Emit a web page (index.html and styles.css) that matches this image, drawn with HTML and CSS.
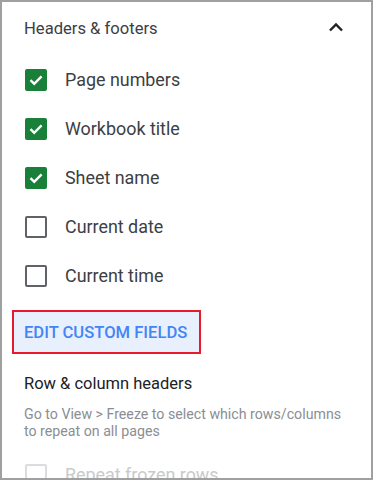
FILE: index.html
```html
<!DOCTYPE html>
<html lang="en">
    <head>
        <meta charset="UTF-8" />
        <meta name="viewport" content="width=device-width, initial-scale=1.0" />
        <title>Headers &amp; footers</title>
        <link rel="stylesheet" href="styles.css">
    </head>
    <body>
        <div class="panel">
            <div class="section-head">
                <span>Headers &amp; footers</span>
                <svg class="chevron" width="16" height="10" viewBox="0 0 16 10">
                    <polyline points="2,8.5 8,2.5 14,8.5" fill="none" stroke="#202124" stroke-width="2.4" />
                </svg>
            </div>

            <ul class="options">
                <li class="option">
                    <span class="box checked">
                        <svg width="22" height="22" viewBox="0 0 22 22"><path d="M5.5 11.2l3.7 3.7 7.4-7.6" fill="none" stroke="#fff" stroke-width="2.4" /></svg>
                    </span>
                    <span class="label">Page numbers</span>
                </li>
                <li class="option">
                    <span class="box checked">
                        <svg width="22" height="22" viewBox="0 0 22 22"><path d="M5.5 11.2l3.7 3.7 7.4-7.6" fill="none" stroke="#fff" stroke-width="2.4" /></svg>
                    </span>
                    <span class="label">Workbook title</span>
                </li>
                <li class="option">
                    <span class="box checked">
                        <svg width="22" height="22" viewBox="0 0 22 22"><path d="M5.5 11.2l3.7 3.7 7.4-7.6" fill="none" stroke="#fff" stroke-width="2.4" /></svg>
                    </span>
                    <span class="label">Sheet name</span>
                </li>
                <li class="option">
                    <span class="box"></span>
                    <span class="label">Current date</span>
                </li>
                <li class="option">
                    <span class="box"></span>
                    <span class="label">Current time</span>
                </li>
            </ul>

            <button class="custom-btn">EDIT CUSTOM FIELDS</button>

            <div class="sub-title">Row &amp; column headers</div>
            <p class="hint">Go to View &gt; Freeze to select which rows/columns to repeat on all pages</p>

            <div class="option disabled">
                <span class="box"></span>
                <span class="label">Repeat frozen rows</span>
            </div>
        </div>
    </body>
</html>
```

FILE: styles.css
```css
* {
    box-sizing: border-box;
}

body {
    margin: 0;
    font-family: Roboto, "Liberation Sans", Arial, sans-serif;
    background-color: #fff;
}

.panel {
    width: 373px;
    height: 480px;
    border: 2px solid #a0a0a0;
    padding: 12px 22px 0 22px;
    overflow: hidden;
}

.section-head {
    height: 28px;
    display: flex;
    align-items: center;
    justify-content: space-between;
    font-size: 16.6px;
    color: #3c4043;
}

.chevron {
    margin-right: 5px;
    margin-top: -2px;
}

.options {
    list-style: none;
    margin: 13px 0 0 0;
    padding: 0;
}

.option {
    height: 49px;
    display: flex;
    align-items: center;
}

.box {
    width: 22px;
    height: 22px;
    margin-left: 1px;
    border: 2px solid #5f6368;
    border-radius: 2px;
    display: flex;
    align-items: center;
    justify-content: center;
}

.box.checked {
    background-color: #188038;
    border-color: #188038;
}

.box svg {
    flex: none;
}

.label {
    margin-left: 18px;
    font-size: 17.9px;
    color: #3c4043;
}

.custom-btn {
    display: block;
    margin: 10px 0 0 -12px;
    height: 44px;
    padding: 0 12px 0 10px;
    border: 2px solid #e8192c;
    background-color: #e8f0fe;
    color: #4285f4;
    font-family: inherit;
    font-size: 16.6px;
    font-weight: 500;
}

.sub-title {
    margin-top: 18px;
    line-height: 24px;
    font-size: 16.5px;
    color: #202124;
}

.hint {
    max-width: 322px;
    margin: 10px 0 0 0;
    font-size: 14.2px;
    line-height: 17px;
    color: #8a8e93;
}

.option.disabled {
    margin-top: 10px;
}

.option.disabled .box {
    border-color: #dadce0;
}

.option.disabled .label {
    color: #c8cacd;
}
```
